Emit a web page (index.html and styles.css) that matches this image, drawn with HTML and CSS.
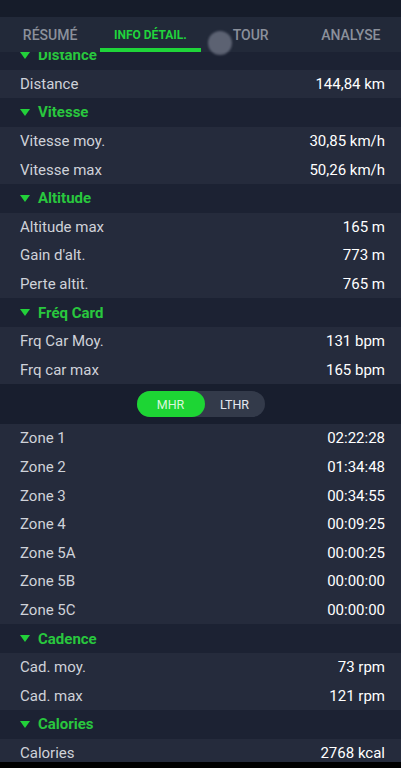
FILE: index.html
```html
<!DOCTYPE html>
<html lang="fr">
<head>
    <meta charset="UTF-8">
    <meta name="viewport" content="width=device-width, initial-scale=1.0">
    <title>Info détail</title>
    <link rel="stylesheet" href="styles.css">
</head>
<body>

    <div class="status"></div>

    <!-- Onglets -->
    <div class="tabs">
        <div class="tab">Résumé</div>
        <div class="tab active">Info détail.</div>
        <div class="tab">Tour</div>
        <div class="tab">Analyse</div>
        <span class="ripple"></span>
    </div>

    <div class="content">
        <div class="list">
            <div class="section"><span class="arrow"></span>Distance</div>
            <div class="row"><span>Distance</span><span class="value">144,84 km</span></div>

            <div class="section"><span class="arrow"></span>Vitesse</div>
            <div class="row"><span>Vitesse moy.</span><span class="value">30,85 km/h</span></div>
            <div class="row"><span>Vitesse max</span><span class="value">50,26 km/h</span></div>

            <div class="section"><span class="arrow"></span>Altitude</div>
            <div class="row"><span>Altitude max</span><span class="value">165 m</span></div>
            <div class="row"><span>Gain d'alt.</span><span class="value">773 m</span></div>
            <div class="row"><span>Perte altit.</span><span class="value">765 m</span></div>

            <div class="section"><span class="arrow"></span>Fréq Card</div>
            <div class="row"><span>Frq Car Moy.</span><span class="value">131 bpm</span></div>
            <div class="row"><span>Frq car max</span><span class="value">165 bpm</span></div>

            <!-- Choix MHR / LTHR -->
            <div class="switch-band">
                <div class="switch">
                    <div class="switch-option on">MHR</div>
                    <div class="switch-option">LTHR</div>
                </div>
            </div>

            <div class="row"><span>Zone 1</span><span class="value">02:22:28</span></div>
            <div class="row"><span>Zone 2</span><span class="value">01:34:48</span></div>
            <div class="row"><span>Zone 3</span><span class="value">00:34:55</span></div>
            <div class="row"><span>Zone 4</span><span class="value">00:09:25</span></div>
            <div class="row"><span>Zone 5A</span><span class="value">00:00:25</span></div>
            <div class="row"><span>Zone 5B</span><span class="value">00:00:00</span></div>
            <div class="row"><span>Zone 5C</span><span class="value">00:00:00</span></div>

            <div class="section"><span class="arrow"></span>Cadence</div>
            <div class="row"><span>Cad. moy.</span><span class="value">73 rpm</span></div>
            <div class="row"><span>Cad. max</span><span class="value">121 rpm</span></div>

            <div class="section"><span class="arrow"></span>Calories</div>
            <div class="row"><span>Calories</span><span class="value">2768 kcal</span></div>
        </div>
    </div>

</body>
</html>
```

FILE: styles.css
```css
body {
    margin: 0;
    padding: 0;
    background-color: #000;
    font-family: Roboto, 'Liberation Sans', sans-serif;
    width: 401px;
    height: 768px;
    overflow: hidden;
    display: flex;
    flex-direction: column;
}

.status {
    height: 17px;
    background-color: #161c2a;
}

/* Barre des onglets */
.tabs {
    position: relative;
    height: 35px;
    background-color: #222939;
    display: flex;
    z-index: 2;
}

.tab {
    flex: 1;
    display: flex;
    align-items: center;
    justify-content: center;
    font-size: 14px;
    font-weight: 500;
    text-transform: uppercase;
    color: #8b909b;
}

.tab.active {
    color: #20d43c;
    font-size: 12px;
    font-weight: 700;
    box-shadow: inset 0 -4px 0 #1fd43a;
}

/* Cercle gris du toucher */
.ripple {
    position: absolute;
    left: 208px;
    top: 14px;
    width: 24px;
    height: 24px;
    border-radius: 50%;
    background-color: rgba(140, 146, 162, 0.55);
    filter: blur(1px);
}

.content {
    height: 710px;
    overflow: hidden;
    background-color: #1c2233;
}

.list {
    margin-top: -11px;
}

.section {
    height: 28.6px;
    display: flex;
    align-items: center;
    padding-left: 20px;
    background-color: #1c2233;
    color: #29c73e;
    font-size: 15px;
    font-weight: 700;
}

.arrow {
    width: 0;
    height: 0;
    border-left: 5.5px solid transparent;
    border-right: 5.5px solid transparent;
    border-top: 7px solid #22d13a;
    margin-right: 8px;
}

.row {
    height: 28.6px;
    display: flex;
    align-items: center;
    justify-content: space-between;
    padding: 0 16px 0 20px;
    background-color: #252b3c;
    color: #cfd2d9;
    font-size: 15px;
}

.value {
    color: #fff;
}

.switch-band {
    height: 40px;
    display: flex;
    align-items: center;
    justify-content: center;
    background-color: #181e2e;
}

.switch {
    width: 128px;
    height: 26px;
    display: flex;
    border-radius: 13px;
    background-color: #333a4a;
}

.switch-option {
    flex: 1;
    display: flex;
    align-items: center;
    justify-content: center;
    border-radius: 13px;
    font-size: 12.5px;
    color: #e6e8ee;
}

.switch-option.on {
    flex: 0 0 68px;
    background-color: #1dd534;
    color: #d9f7dc;
}
```
